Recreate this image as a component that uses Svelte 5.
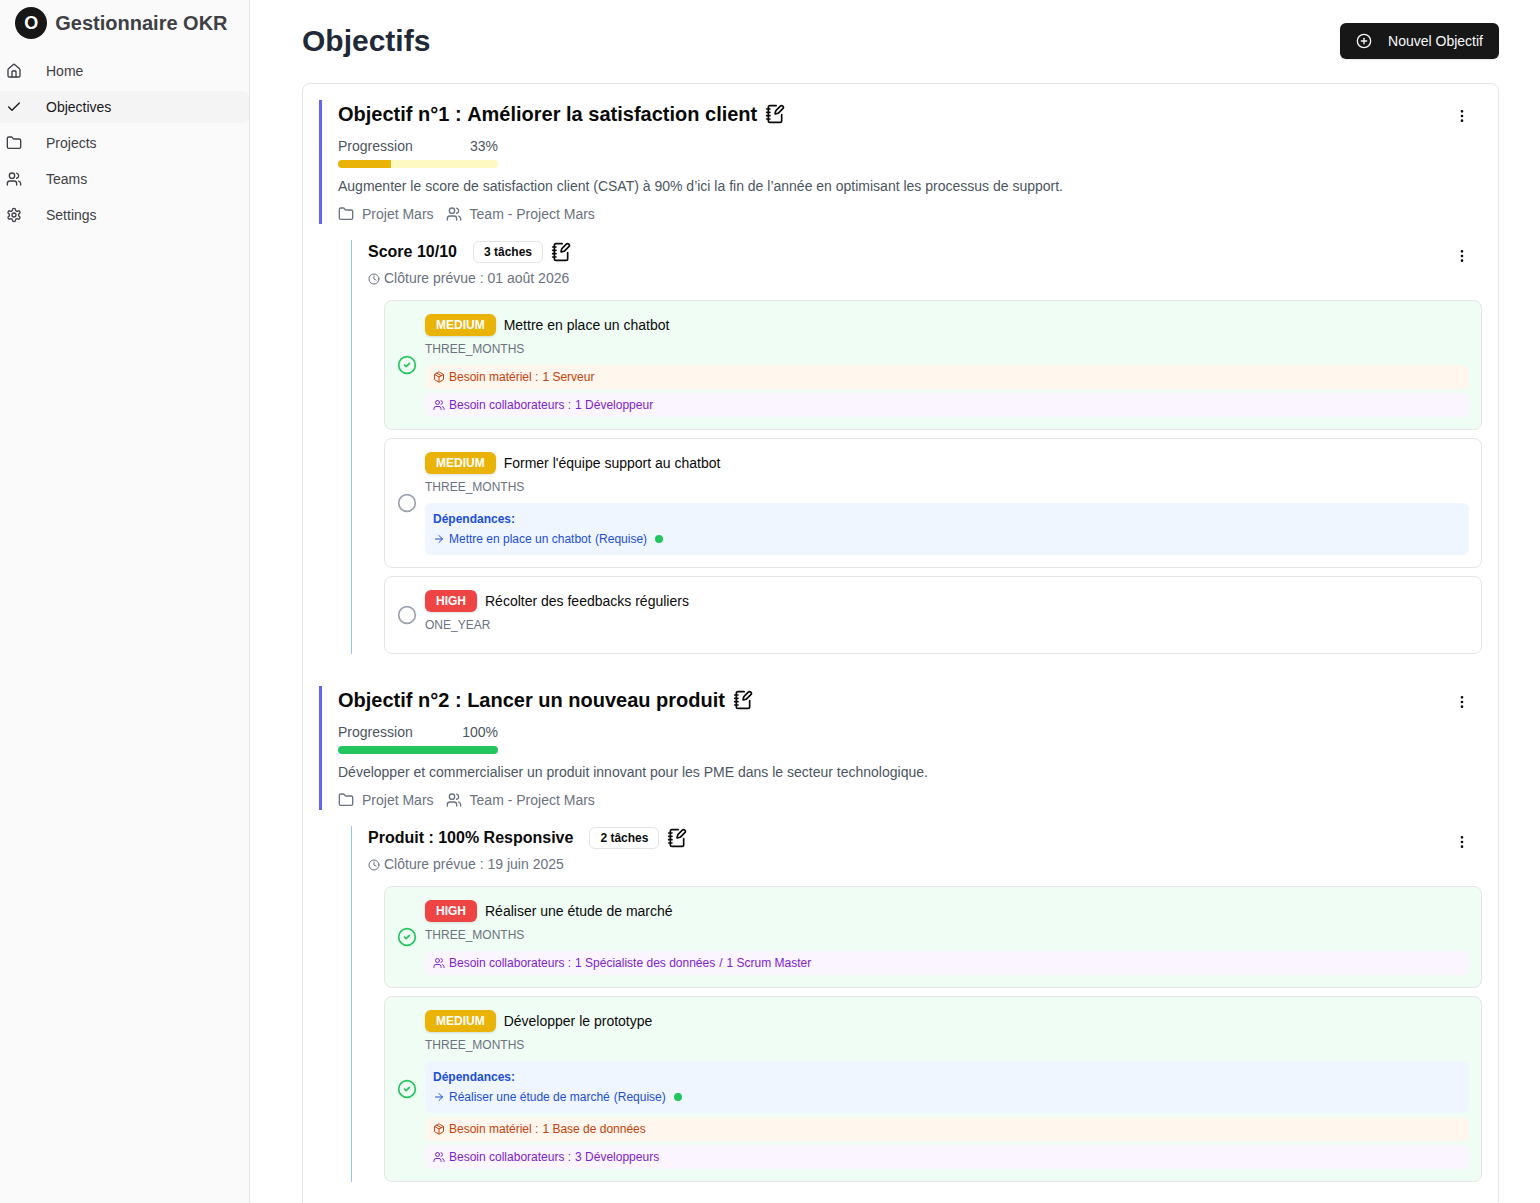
<script>
  const nav = [
    { label: 'Home', icon: 'home' },
    { label: 'Objectives', icon: 'check', active: true },
    { label: 'Projects', icon: 'folder' },
    { label: 'Teams', icon: 'users' },
    { label: 'Settings', icon: 'settings' }
  ];

  const objectives = [
    {
      number: 'Objectif n°1 :',
      title: 'Améliorer la satisfaction client',
      progress: 33,
      tone: 'yellow',
      description:
        'Augmenter le score de satisfaction client (CSAT) à 90% d’ici la fin de l’année en optimisant les processus de support.',
      project: 'Projet Mars',
      team: 'Team - Project Mars',
      results: [
        {
          title: 'Score 10/10',
          due: '01 août 2026',
          tasks: [
            { priority: 'MEDIUM', title: 'Mettre en place un chatbot', term: 'THREE_MONTHS', done: true, material: '1 Serveur', people: ['1 Développeur'] },
            { priority: 'MEDIUM', title: "Former l'équipe support au chatbot", term: 'THREE_MONTHS', done: false, dependency: 'Mettre en place un chatbot' },
            { priority: 'HIGH', title: 'Récolter des feedbacks réguliers', term: 'ONE_YEAR', done: false }
          ]
        }
      ]
    },
    {
      number: 'Objectif n°2 :',
      title: 'Lancer un nouveau produit',
      progress: 100,
      tone: 'green',
      description: 'Développer et commercialiser un produit innovant pour les PME dans le secteur technologique.',
      project: 'Projet Mars',
      team: 'Team - Project Mars',
      results: [
        {
          title: 'Produit : 100% Responsive',
          due: '19 juin 2025',
          tasks: [
            { priority: 'HIGH', title: 'Réaliser une étude de marché', term: 'THREE_MONTHS', done: true, people: ['1 Spécialiste des données', '1 Scrum Master'] },
            { priority: 'MEDIUM', title: 'Développer le prototype', term: 'THREE_MONTHS', done: true, dependency: 'Réaliser une étude de marché', material: '1 Base de données', people: ['3 Développeurs'] }
          ]
        }
      ]
    }
  ];
</script>

{#snippet icon(name, size)}
  <svg class="icon" width={size} height={size} viewBox="0 0 24 24" fill="none" stroke="currentColor" stroke-width="2" stroke-linecap="round" stroke-linejoin="round">
    {#if name === 'home'}
      <path d="M15 21v-8a1 1 0 0 0-1-1h-4a1 1 0 0 0-1 1v8" />
      <path d="M3 10a2 2 0 0 1 .709-1.528l7-5.999a2 2 0 0 1 2.582 0l7 5.999A2 2 0 0 1 21 10v9a2 2 0 0 1-2 2H5a2 2 0 0 1-2-2z" />
    {:else if name === 'check'}
      <path d="M20 6 9 17l-5-5" />
    {:else if name === 'folder'}
      <path d="M20 20a2 2 0 0 0 2-2V8a2 2 0 0 0-2-2h-7.9a2 2 0 0 1-1.69-.9L9.6 3.9A2 2 0 0 0 7.93 3H4a2 2 0 0 0-2 2v13a2 2 0 0 0 2 2Z" />
    {:else if name === 'users'}
      <path d="M16 21v-2a4 4 0 0 0-4-4H6a4 4 0 0 0-4 4v2" />
      <circle cx="9" cy="7" r="4" />
      <path d="M22 21v-2a4 4 0 0 0-3-3.87" />
      <path d="M16 3.13a4 4 0 0 1 0 7.75" />
    {:else if name === 'settings'}
      <path d="M12.22 2h-.44a2 2 0 0 0-2 2v.18a2 2 0 0 1-1 1.73l-.43.25a2 2 0 0 1-2 0l-.15-.08a2 2 0 0 0-2.73.73l-.22.38a2 2 0 0 0 .73 2.73l.15.1a2 2 0 0 1 1 1.72v.51a2 2 0 0 1-1 1.74l-.15.09a2 2 0 0 0-.73 2.73l.22.38a2 2 0 0 0 2.73.73l.15-.08a2 2 0 0 1 2 0l.43.25a2 2 0 0 1 1 1.73V20a2 2 0 0 0 2 2h.44a2 2 0 0 0 2-2v-.18a2 2 0 0 1 1-1.73l.43-.25a2 2 0 0 1 2 0l.15.08a2 2 0 0 0 2.73-.73l.22-.39a2 2 0 0 0-.73-2.73l-.15-.08a2 2 0 0 1-1-1.74v-.5a2 2 0 0 1 1-1.74l.15-.09a2 2 0 0 0 .73-2.73l-.22-.38a2 2 0 0 0-2.73-.73l-.15.08a2 2 0 0 1-2 0l-.43-.25a2 2 0 0 1-1-1.73V4a2 2 0 0 0-2-2z" />
      <circle cx="12" cy="12" r="3" />
    {:else if name === 'plus'}
      <circle cx="12" cy="12" r="10" />
      <path d="M8 12h8" />
      <path d="M12 8v8" />
    {:else if name === 'notebook'}
      <path d="M13.4 2H6a2 2 0 0 0-2 2v16a2 2 0 0 0 2 2h12a2 2 0 0 0 2-2v-7.4" />
      <path d="M2 6h4" />
      <path d="M2 10h4" />
      <path d="M2 14h4" />
      <path d="M2 18h4" />
      <path d="M21.378 5.626a1 1 0 1 0-3.004-3.004l-5.01 5.012a2 2 0 0 0-.506.854l-.837 2.87a.5.5 0 0 0 .62.62l2.87-.837a2 2 0 0 0 .854-.506z" />
    {:else if name === 'more'}
      <circle cx="12" cy="12" r="1" />
      <circle cx="12" cy="5" r="1" />
      <circle cx="12" cy="19" r="1" />
    {:else if name === 'clock'}
      <circle cx="12" cy="12" r="10" />
      <path d="M12 6v6l4 2" />
    {:else if name === 'done'}
      <circle cx="12" cy="12" r="10" />
      <path d="m9 12 2 2 4-4" />
    {:else if name === 'todo'}
      <circle cx="12" cy="12" r="10" />
    {:else if name === 'arrow'}
      <path d="M5 12h14" />
      <path d="m12 5 7 7-7 7" />
    {:else if name === 'package'}
      <path d="M11 21.73a2 2 0 0 0 2 0l7-4A2 2 0 0 0 21 16V8a2 2 0 0 0-1-1.73l-7-4a2 2 0 0 0-2 0l-7 4A2 2 0 0 0 3 8v8a2 2 0 0 0 1 1.73z" />
      <path d="M12 22V12" />
      <path d="m3.3 7 8.7 5 8.7-5" />
      <path d="m7.5 4.27 9 5.15" />
    {/if}
  </svg>
{/snippet}

<div class="app">
  <aside class="sidebar">
    <div class="brand">
      <span class="logo">O</span>
      <span class="brand-name">Gestionnaire OKR</span>
    </div>
    <nav>
      {#each nav as item}
        <div class="nav-item" class:active={item.active}>
          {@render icon(item.icon, 16)}
          <span>{item.label}</span>
        </div>
      {/each}
    </nav>
  </aside>

  <main>
    <header class="page-head">
      <h1>Objectifs</h1>
      <button class="new">
        {@render icon('plus', 16)}
        <span>Nouvel Objectif</span>
      </button>
    </header>

    <div class="card">
      {#each objectives as o}
        <section class="objective">
          <div class="obj-head">
            <div class="obj-info">
              <h2><span class="number">{o.number}</span><span>{o.title}</span>{@render icon('notebook', 20)}</h2>
              <div class="progress">
                <div class="progress-label"><span>Progression</span><span>{o.progress}%</span></div>
                <div class="track {o.tone}"><div class="fill" style="width: {o.progress}%"></div></div>
              </div>
              <p>{o.description}</p>
              <div class="meta">
                <span>{@render icon('folder', 16)}{o.project}</span>
                <span>{@render icon('users', 16)}{o.team}</span>
              </div>
            </div>
            <button class="more" aria-label="Actions">{@render icon('more', 16)}</button>
          </div>

          {#each o.results as r}
            <div class="result">
              <div class="result-head">
                <div>
                  <div class="result-title">
                    <h3>{r.title}</h3>
                    <span class="count">{r.tasks.length} tâches</span>
                    {@render icon('notebook', 20)}
                  </div>
                  <div class="due">{@render icon('clock', 12)}<span>Clôture prévue : {r.due}</span></div>
                </div>
                <button class="more" aria-label="Actions">{@render icon('more', 16)}</button>
              </div>

              <div class="tasks">
                {#each r.tasks as t}
                  <div class="task" class:done={t.done}>
                    <span class="state">{@render icon(t.done ? 'done' : 'todo', 20)}</span>
                    <div class="task-body">
                      <div class="task-title">
                        <span class="priority {t.priority.toLowerCase()}">{t.priority}</span>
                        <span>{t.title}</span>
                      </div>
                      <div class="term">{t.term}</div>
                      <div class="notes">
                        {#if t.dependency}
                          <div class="deps">
                            <strong>Dépendances:</strong>
                            <div class="dep">{@render icon('arrow', 12)}<span>{t.dependency}</span><span>(Requise)</span><i class="dot"></i></div>
                          </div>
                        {/if}
                        {#if t.material}
                          <div class="need material">{@render icon('package', 12)}<span>Besoin matériel :</span><span>{t.material}</span></div>
                        {/if}
                        {#if t.people}
                          <div class="need people">
                            {@render icon('users', 12)}<span>Besoin collaborateurs :</span>
                            {#each t.people as person, i}
                              {#if i > 0}<span>/</span>{/if}
                              <span>{person}</span>
                            {/each}
                          </div>
                        {/if}
                      </div>
                    </div>
                  </div>
                {/each}
              </div>
            </div>
          {/each}
        </section>
      {/each}
    </div>
  </main>
</div>

<style>
  :global(body) {
    background: #fff;
  }
  .app,
  .app * {
    box-sizing: border-box;
  }
  .app {
    display: flex;
    height: 100vh;
    overflow: hidden;
    font-family: 'Liberation Sans', Arial, sans-serif;
    font-size: 14px;
    line-height: 20px;
    color: #0a0a0a;
  }
  h1,
  h2,
  h3,
  p {
    margin: 0;
  }
  button {
    font: inherit;
    border: 0;
    background: none;
  }
  .icon {
    display: block;
    flex: none;
  }

  .sidebar {
    flex: none;
    width: 250px;
    background: #fafafa;
    border-right: 1px solid #e5e5e5;
    color: #3f3f46;
  }
  .brand {
    display: flex;
    align-items: center;
    gap: 8px;
    padding: 7px 15px 16px 15.3px;
  }
  .logo {
    display: flex;
    align-items: center;
    justify-content: center;
    width: 32px;
    height: 32px;
    border-radius: 50%;
    background: #171717;
    color: #fff;
    font-size: 18px;
    font-weight: 700;
  }
  .brand-name {
    font-size: 20px;
    line-height: 28px;
    font-weight: 700;
    white-space: nowrap;
  }
  nav {
    display: flex;
    flex-direction: column;
    gap: 4px;
  }
  .nav-item {
    display: flex;
    align-items: center;
    gap: 24px;
    height: 32px;
    padding-left: 6px;
  }
  .nav-item.active {
    background: #f4f4f4;
    color: #18181b;
    border-radius: 0 6px 6px 0;
  }

  main {
    flex: 1;
    min-width: 0;
    padding: 23px 41px 0 52px;
  }
  .page-head {
    display: flex;
    justify-content: space-between;
    align-items: center;
    height: 36px;
    margin-bottom: 24px;
  }
  h1 {
    font-size: 30px;
    line-height: 36px;
    color: #1f2937;
  }
  .new {
    display: flex;
    align-items: center;
    gap: 16px;
    height: 36px;
    padding: 0 16px;
    border-radius: 6px;
    background: #171717;
    color: #fafafa;
    box-shadow: 0 1px 2px rgba(0, 0, 0, 0.1);
  }

  .card {
    display: flex;
    flex-direction: column;
    gap: 32px;
    padding: 16px 16px 64px;
    border: 1px solid #e5e5e5;
    border-radius: 8px;
  }
  .obj-head {
    display: flex;
    justify-content: space-between;
    align-items: flex-start;
    padding-left: 16px;
    border-left: 3px solid #6366f1;
  }
  .obj-info {
    display: flex;
    flex-direction: column;
    gap: 8px;
  }
  h2 {
    display: flex;
    align-items: center;
    gap: 8px;
    font-size: 20px;
    line-height: 28px;
  }
  .number {
    /* a word space instead of the heading's gap */
    margin-right: -2.44px;
  }
  .progress {
    width: 160px;
    color: #4b5563;
  }
  .progress-label {
    display: flex;
    justify-content: space-between;
    margin-bottom: 4px;
  }
  .track {
    height: 8px;
    border-radius: 4px;
    overflow: hidden;
  }
  .fill {
    height: 100%;
  }
  .track.yellow {
    background: #fef9c3;
  }
  .yellow .fill {
    background: #eab308;
  }
  .track.green {
    background: #dcfce7;
  }
  .green .fill {
    background: #22c55e;
  }
  p {
    color: #4b5563;
  }
  .meta {
    display: flex;
    gap: 12px;
    color: #6b7280;
  }
  .meta span {
    display: flex;
    align-items: center;
    gap: 8px;
  }
  .more {
    display: flex;
    align-items: center;
    justify-content: center;
    width: 40px;
    height: 32px;
    padding: 0;
    color: #0a0a0a;
  }

  .result {
    margin: 16px 0 0 32px;
    padding-left: 16px;
    border-left: 1px solid #93c5fd;
  }
  .result-head {
    display: flex;
    justify-content: space-between;
    align-items: flex-start;
    height: 48px;
  }
  .result-title {
    display: flex;
    align-items: center;
    height: 24px;
    gap: 8px;
  }
  h3 {
    margin-right: 8px;
    font-size: 16px;
    line-height: 24px;
  }
  .count {
    height: 22px;
    padding: 2px 10px;
    border: 1px solid #e5e5e5;
    border-radius: 6px;
    font-size: 12px;
    line-height: 16px;
    font-weight: 700;
  }
  .due {
    display: flex;
    align-items: center;
    gap: 4px;
    margin-top: 4px;
    color: #6b7280;
  }
  .due :global(svg) {
    margin-top: 2px;
  }

  .tasks {
    display: flex;
    flex-direction: column;
    gap: 8px;
    margin: 12px 0 0 16px;
  }
  .task {
    display: flex;
    align-items: center;
    gap: 8px;
    padding: 12px;
    border: 1px solid #e5e5e5;
    border-radius: 8px;
  }
  .task.done {
    background: #f0fdf4;
  }
  .state {
    color: #9ca3af;
  }
  .done .state {
    color: #22c55e;
  }
  .task-body {
    flex: 1;
  }
  .task-title {
    display: flex;
    align-items: center;
    gap: 8px;
    height: 24px;
  }
  .priority {
    height: 22px;
    padding: 3px 11px;
    border-radius: 6px;
    color: #fff;
    font-size: 12px;
    line-height: 16px;
    font-weight: 700;
    box-shadow: 0 1px 3px rgba(0, 0, 0, 0.1), 0 1px 2px -1px rgba(0, 0, 0, 0.1);
  }
  .medium {
    background: #eab308;
  }
  .high {
    background: #ef4444;
  }
  .term {
    margin-top: 4px;
    font-size: 12px;
    line-height: 16px;
    color: #6b7280;
  }
  .notes {
    display: flex;
    flex-direction: column;
    gap: 4px;
    margin-top: 8px;
    font-size: 12px;
    line-height: 16px;
  }
  .deps {
    display: flex;
    flex-direction: column;
    gap: 4px;
    padding: 8px;
    border-radius: 6px;
    background: #eff6ff;
    color: #1d4ed8;
  }
  .dep,
  .need {
    display: flex;
    align-items: center;
    gap: 4px;
  }
  .dot {
    width: 8px;
    height: 8px;
    margin-left: 4px;
    border-radius: 50%;
    background: #22c55e;
  }
  .need {
    padding: 4px 8px;
    border-radius: 6px;
  }
  .material {
    background: #fff7ed;
    color: #c2410c;
  }
  .people {
    background: #faf5ff;
    color: #7e22ce;
  }
</style>
